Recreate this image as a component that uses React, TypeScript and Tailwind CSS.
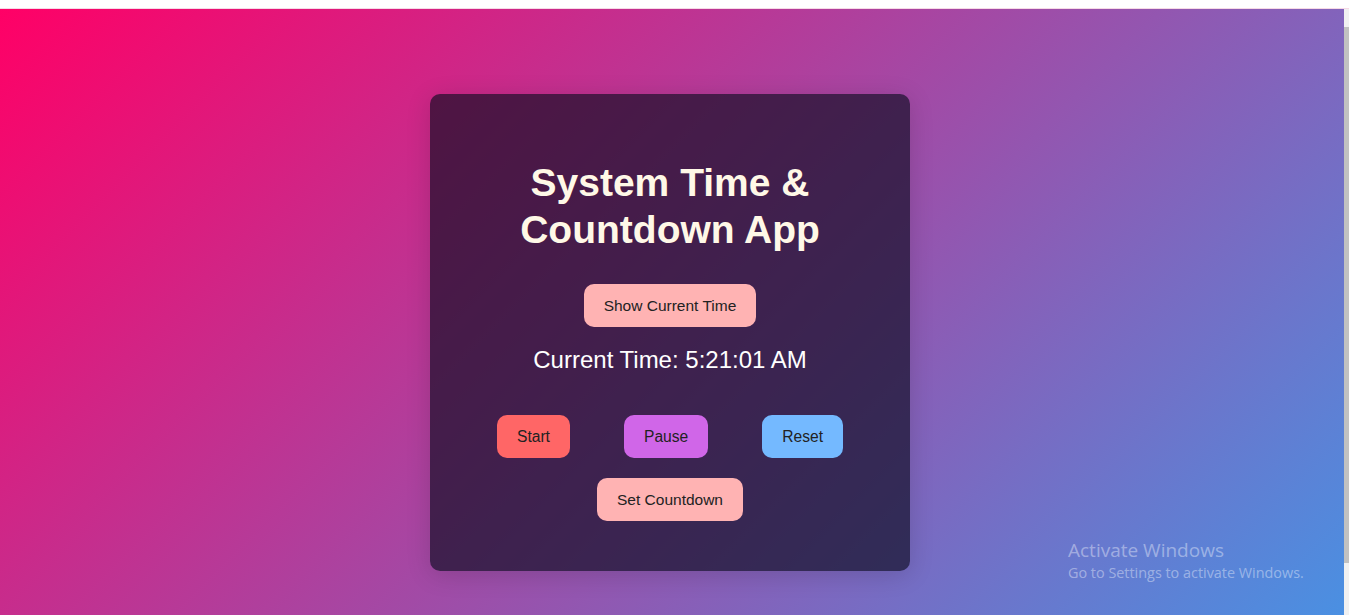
import React, { useState } from 'react';

export default function App() {
  const [time] = useState('5:21:01 AM');

  return (
    <div className="h-[615px] w-full flex flex-col bg-white overflow-hidden font-['Liberation_Sans',Arial,sans-serif]">
      {/* browser top edge */}
      <div className="h-[9px] bg-white border-b border-[#f6d9e6]" />

      <div className="flex flex-1">
        <main className="relative flex-1 flex justify-center items-start pt-[85px] pr-[4px] bg-[linear-gradient(135deg,#ff0066,#4a90e2)]">
          <div className="w-[480px] px-[40px] pt-[40px] pb-[40px] rounded-[10px] text-center bg-[rgba(10,10,30,0.65)] shadow-[0_4px_24px_rgba(0,0,0,0.15)]">
            <h1 className="mt-[25px] text-[39px] leading-[47px] font-bold text-[#fff8e7]">
              System Time &amp; Countdown App
            </h1>

            <button className="mt-[31px] px-[20px] py-[12px] text-[15.5px] leading-[19px] text-[#222] bg-[#ffb3b3] rounded-[10px]">
              Show Current Time
            </button>

            <p className="mt-[19px] text-[24px] leading-[28px] text-white">Current Time: {time}</p>

            <div className="mt-[41px] flex justify-around">
              <button className="px-[20px] py-[12px] text-[15.6px] leading-[19px] text-[#222] bg-[#ff6666] rounded-[10px]">
                Start
              </button>
              <button className="px-[20px] py-[12px] text-[15.6px] leading-[19px] text-[#222] bg-[#d066e8] rounded-[10px]">
                Pause
              </button>
              <button className="px-[20px] py-[12px] text-[15.6px] leading-[19px] text-[#222] bg-[#74b9ff] rounded-[10px]">
                Reset
              </button>
            </div>

            <button className="mt-[20px] mb-[10px] px-[20px] py-[12px] text-[15.5px] leading-[19px] text-[#222] bg-[#ffb3b3] rounded-[10px]">
              Set Countdown
            </button>
          </div>

          {/* windows watermark */}
          <div className="absolute left-[1068px] top-[529px] font-['Open_Sans','Noto_Sans',sans-serif] text-white/40">
            <div className="text-[19px] leading-[25px]">Activate Windows</div>
            <div className="text-[14.4px] leading-[20px]">Go to Settings to activate Windows.</div>
          </div>
        </main>

        {/* scrollbar */}
        <div className="w-[5px] bg-[#f1f1f1] pt-[18px]">
          <div className="h-[536px] bg-[#c1c1c1]" />
        </div>
      </div>
    </div>
  );
}
